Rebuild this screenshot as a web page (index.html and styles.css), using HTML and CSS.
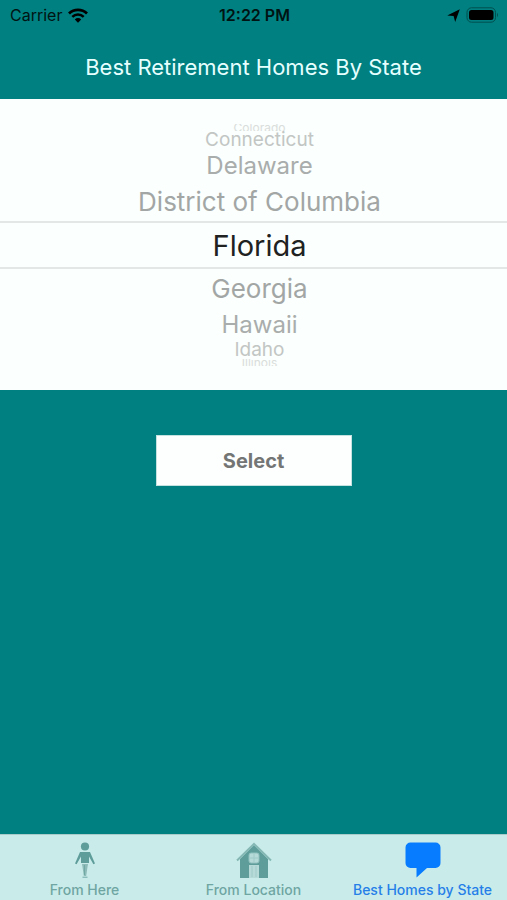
FILE: index.html
```
<!DOCTYPE html>
<html lang="en">
<head>
    <meta charset="UTF-8">
    <meta name="viewport" content="width=device-width, initial-scale=1.0">
    <title>Best Retirement Homes By State</title>
    <link rel="stylesheet" href="styles.css">
</head>
<body>
    <header class="header">
        <div class="status">
            <div class="status-left">
                <span>Carrier</span>
                <svg width="20" height="15" viewBox="0 0 20 15" aria-hidden="true">
                    <path d="M1 5.4a13 13 0 0 1 18 0" fill="none" stroke="#000" stroke-width="2.8"/>
                    <path d="M4.3 8.9a8.2 8.2 0 0 1 11.4 0" fill="none" stroke="#000" stroke-width="2.5"/>
                    <path d="M6.8 11.4a4.6 4.6 0 0 1 6.4 0L10 14.7z"/>
                </svg>
            </div>
            <time class="clock">12:22 PM</time>
            <div class="status-right">
                <svg width="13" height="13" viewBox="0 0 13 13" aria-hidden="true">
                    <path d="M12.8.2L8.2 13 6.6 7 .2 6.6z"/>
                </svg>
                <svg width="33" height="16" viewBox="0 0 33 16" aria-hidden="true">
                    <rect x="1" y=".8" width="28.5" height="14.4" rx="4.5" fill="none" stroke="#004f4f"/>
                    <rect x="3" y="3" width="24.5" height="10" rx="2.5"/>
                    <path d="M31 5.8q2 2.2 0 4.4z" fill="#004f4f"/>
                </svg>
            </div>
        </div>
        <h1>Best Retirement Homes By State</h1>
    </header>

    <main>
        <form>
            <div class="picker" role="radiogroup" aria-label="State">
                <label class="row edge"><input type="radio" name="state" value="CO">Colorado</label>
                <label class="row far"><input type="radio" name="state" value="CT">Connecticut</label>
                <label class="row mid"><input type="radio" name="state" value="DE">Delaware</label>
                <label class="row near"><input type="radio" name="state" value="DC">District of Columbia</label>
                <label class="row selected"><input type="radio" name="state" value="FL" checked>Florida</label>
                <label class="row near"><input type="radio" name="state" value="GA">Georgia</label>
                <label class="row mid"><input type="radio" name="state" value="HI">Hawaii</label>
                <label class="row far"><input type="radio" name="state" value="ID">Idaho</label>
                <label class="row edge"><input type="radio" name="state" value="IL">Illinois</label>
            </div>
            <button class="select-btn" type="button">Select</button>
        </form>
    </main>

    <nav class="tabs">
        <a class="tab" href="#here">
            <svg width="22" height="36" viewBox="0 0 22 36" aria-hidden="true">
                <circle cx="11" cy="4.5" r="4.1" fill="#5f9d9b"/>
                <path d="M6 10h10l5 11.5-1.6.8L15 14.5V21H7v-6.5L2.6 22.3 1 21.5z" fill="#5f9d9b"/>
                <path d="M8 22h6l-.8 5-1 7H9.8l-1-7z" fill="#8dbbb8"/>
                <path d="M10.5 23v10M8.5 35.2h5" stroke="#6fa8a5" fill="none"/>
            </svg>
            <span>From Here</span>
        </a>
        <a class="tab" href="#location">
            <svg width="36" height="36" viewBox="0 0 36 36" aria-hidden="true">
                <path d="M4 17L18 3l14 14v19H4z" fill="#5f9d9b"/>
                <path d="M1 18.5L18 2l17 16.5" fill="none" stroke="#85b8b5" stroke-width="2"/>
                <rect x="13" y="11" width="10" height="10" rx="2" fill="#b5dad8" stroke="#8fc0bd"/>
                <path d="M18 12v8M14 16h8" stroke="#a0cbc8"/>
                <rect x="13" y="23" width="10" height="13" fill="#b5dad8"/>
                <path d="M16 24v11M20 24v11" stroke="#a0cbc8"/>
            </svg>
            <span>From Location</span>
        </a>
        <a class="tab active" href="#state" aria-current="page">
            <svg width="36" height="36" viewBox="0 0 36 36" aria-hidden="true">
                <path d="M5.5.5h25a5 5 0 0 1 5 5V21a5 5 0 0 1-5 5H22L11.5 35.5V26h-6a5 5 0 0 1-5-5V5.5a5 5 0 0 1 5-5z" fill="#087cff"/>
            </svg>
            <span>Best Homes by State</span>
        </a>
    </nav>
</body>
</html>
```
FILE: styles.css
```
* { box-sizing: border-box; }
body { display: flex; flex-direction: column; min-height: 100vh; margin: 0; background: #008080; font-family: Inter, "Liberation Sans", sans-serif; }

.header { padding-bottom: 16px; }
.status { display: grid; grid-template-columns: 1fr auto 1fr; align-items: center; height: 30px; padding: 0 8px 0 10px; font-size: 16px; color: #001414; }
.status-left { display: flex; align-items: center; gap: 6px; }
.status-right { display: flex; align-items: center; justify-content: flex-end; gap: 6px; }
.clock { font-weight: 600; }
h1 { margin: 22px 0 0; font-size: 22px; font-weight: 400; line-height: 31px; text-align: center; color: #e6ffff; }

main { flex: 1; }
form { display: flex; flex-direction: column; align-items: center; gap: 45px; }

/* wheel rows get smaller and lighter away from the selected one */
.picker { width: 100%; padding: 25px 0 24px; background: #fbfffd; }
.row { display: flex; align-items: center; justify-content: center; padding-left: 12px; white-space: nowrap; cursor: pointer; }
.row input { position: absolute; opacity: 0; pointer-events: none; }
.selected { height: 48px; border: solid #e3e7e6; border-width: 2px 0; font-size: 29px; color: #202222; }
.near { height: 39px; font-size: 26px; color: #a2a6a5; }
.mid { height: 33px; font-size: 24px; color: #a9adac; }
.far { height: 18px; font-size: 19px; line-height: 18px; color: #c2c6c4; }
.edge { height: 7px; overflow: hidden; font-size: 12px; line-height: 7px; color: #d9dddb; }

.select-btn { width: 196px; height: 51px; border: 1px solid #c4e2e0; background: #fdfffe; font-family: inherit; font-size: 20px; font-weight: 700; color: #747675; cursor: pointer; }

.tabs { display: grid; grid-template-columns: repeat(3, 1fr); height: 66px; border-top: 1px solid #a9cccb; background: #c9ecea; }
.tab { display: flex; flex-direction: column; align-items: center; gap: 4px; padding-top: 7px; font-size: 14px; font-weight: 500; line-height: 16px; white-space: nowrap; text-decoration: none; color: #6fa5a2; }
.active { color: #267fe8; }
```
